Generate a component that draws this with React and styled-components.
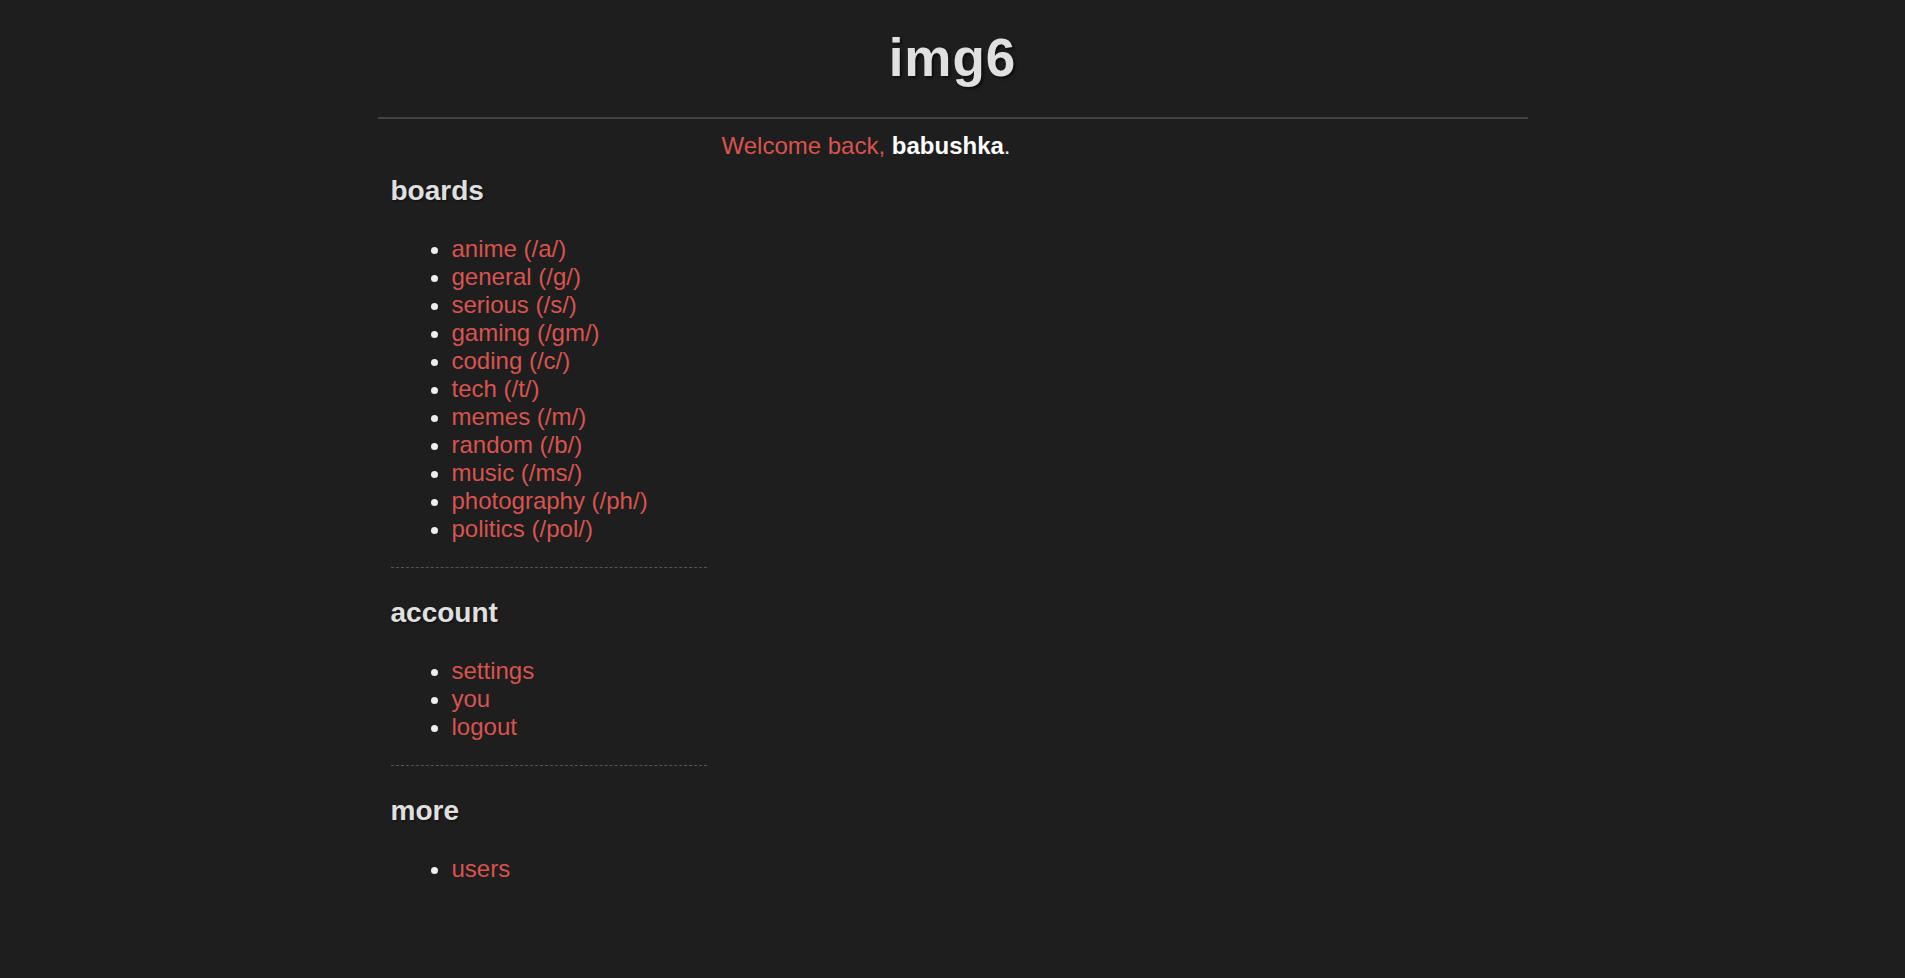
import React from "react";
import styled, { createGlobalStyle } from "styled-components";

const GlobalStyle = createGlobalStyle`
  html, body {
    margin: 0;
    padding: 0;
    background: #1e1e1e;
    color: #e0e0e0;
    font-family: "Liberation Sans", Arial, sans-serif;
    font-size: 24px;
  }
  * { box-sizing: border-box; }
`;

const Page = styled.div`
  width: 1150px;
  margin: 0 auto;
`;

const Header = styled.header`
  padding: 28px 0 29px;
  border-bottom: 2px solid #444;
  text-align: center;
`;

const Title = styled.h1`
  margin: 0;
  font-size: 53px;
  line-height: 60px;
  font-weight: bold;
  letter-spacing: 1px;
  color: #e0e0e0;
  text-shadow: 2px 2px 3px rgba(0, 0, 0, 0.6);
`;

const Body = styled.div`
  display: grid;
  grid-template-columns: 316px 1fr;
  column-gap: 15px;
  padding: 0 13px;
`;

const Aside = styled.aside`
  padding-top: 27px;
`;

const Main = styled.main`
  padding-top: 13px;
`;

const Welcome = styled.p`
  margin: 0;
  color: #e8e8e8;
`;

const Red = styled.span`
  color: #d9534f;
`;

const User = styled.strong`
  color: #ffffff;
  font-weight: bold;
`;

const Section = styled.section`
  border-bottom: ${(p) => (p.$last ? "none" : "1px dashed #555")};
`;

const Heading = styled.h3`
  margin: 29px 0 28px;
  font-size: 28px;
  font-weight: bold;
  color: #e0e0e0;
  text-shadow: 1px 1px 2px rgba(0, 0, 0, 0.6);
`;

const List = styled.ul`
  margin: 24px 0;
  padding-left: 61px;
  list-style: disc;
`;

const Item = styled.li`
  color: #eeeeee;
`;

const Link = styled.a`
  color: #d9534f;
  text-decoration: none;
`;

const sections = [
  {
    title: "boards",
    items: [
      "anime (/a/)",
      "general (/g/)",
      "serious (/s/)",
      "gaming (/gm/)",
      "coding (/c/)",
      "tech (/t/)",
      "memes (/m/)",
      "random (/b/)",
      "music (/ms/)",
      "photography (/ph/)",
      "politics (/pol/)",
    ],
  },
  { title: "account", items: ["settings", "you", "logout"] },
  { title: "more", items: ["users"] },
];

export default function App() {
  return (
    <>
      <GlobalStyle />
      <Page>
        <Header>
          <Title>img6</Title>
        </Header>
        <Body>
          <Aside>
            {sections.map((s, i) => (
              <Section key={s.title} $last={i === sections.length - 1}>
                <Heading>{s.title}</Heading>
                <List>
                  {s.items.map((it) => (
                    <Item key={it}>
                      <Link href="#">{it}</Link>
                    </Item>
                  ))}
                </List>
              </Section>
            ))}
          </Aside>
          <Main>
            <Welcome>
              <Red>Welcome back, </Red>
              <User>babushka</User>.
            </Welcome>
          </Main>
        </Body>
      </Page>
    </>
  );
}
